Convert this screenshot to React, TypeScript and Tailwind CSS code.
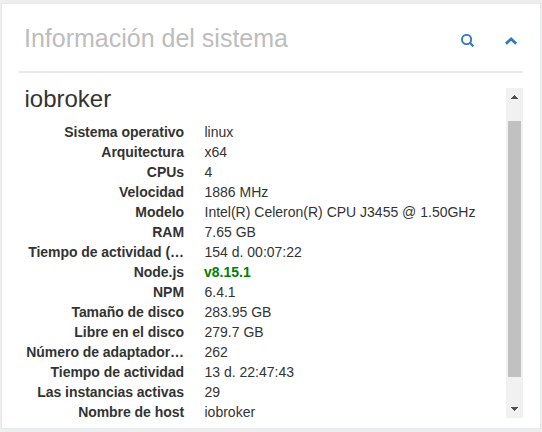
const rows: { label: string; value: string; highlight?: boolean }[] = [
  { label: 'Sistema operativo', value: 'linux' },
  { label: 'Arquitectura', value: 'x64' },
  { label: 'CPUs', value: '4' },
  { label: 'Velocidad', value: '1886 MHz' },
  { label: 'Modelo', value: 'Intel(R) Celeron(R) CPU J3455 @ 1.50GHz' },
  { label: 'RAM', value: '7.65 GB' },
  { label: 'Tiempo de actividad (…', value: '154 d. 00:07:22' },
  { label: 'Node.js', value: 'v8.15.1', highlight: true },
  { label: 'NPM', value: '6.4.1' },
  { label: 'Tamaño de disco', value: '283.95 GB' },
  { label: 'Libre en el disco', value: '279.7 GB' },
  { label: 'Número de adaptador…', value: '262' },
  { label: 'Tiempo de actividad', value: '13 d. 22:47:43' },
  { label: 'Las instancias activas', value: '29' },
  { label: 'Nombre de host', value: 'iobroker' },
];

function SearchIcon() {
  return (
    <svg width="13" height="13" viewBox="0 0 13 13" fill="none" stroke="#337ab7" strokeWidth="1.9">
      <circle cx="5.6" cy="5.5" r="4.6" />
      <path d="M8.8 8.8 12.4 12.4" strokeWidth="2.2" />
    </svg>
  );
}

function ChevronUpIcon() {
  return (
    <svg width="13" height="8" viewBox="0 0 13 8" fill="none" stroke="#337ab7" strokeWidth="2.8">
      <path d="M1 6.7 6.1 2 11.2 6.7" />
    </svg>
  );
}

function Scrollbar() {
  return (
    <div className="flex h-[330px] w-[17px] flex-col items-center bg-[#f1f1f1]">
      <svg className="shrink-0" width="17" height="17" viewBox="0 0 17 17" fill="#505050" shapeRendering="crispEdges">
        <path d="M8 7h1v1h1v1h1v1h1v1H5v-1h1V9h1V8h1z" />
      </svg>
      <div className="mt-4 h-64 w-[13px] bg-[#c1c1c1]" />
      <svg className="mt-auto shrink-0" width="17" height="17" viewBox="0 0 17 17" fill="#505050" shapeRendering="crispEdges">
        <path d="M5 6h7v1h-1v1h-1v1H9v1H8V9H7V8H6V7H5z" />
      </svg>
    </div>
  );
}

export default function App() {
  return (
    <div className="h-[432px] w-[542px] overflow-hidden bg-[#eeeeee] pt-[3px] pl-px font-['Liberation_Sans',Arial,sans-serif] text-[#333]">
      <section className="h-[426px] w-[540px] border border-[#e6e9ed] bg-white pl-[17px]">
        <header className="flex h-[69px] w-[504px] border-b-2 border-[#e6e9ed] pl-[5px]">
          <h2 className="mt-[17px] h-[34px] w-[437px] text-[25px] leading-[34px] whitespace-nowrap text-[#bdbdbd]">
            Información del sistema
          </h2>
          <button className="mt-[30px] h-[13px] w-[13px]" aria-label="Buscar">
            <SearchIcon />
          </button>
          <button className="mt-[33px] ml-[31px] h-2 w-[13px]" aria-label="Contraer">
            <ChevronUpIcon />
          </button>
        </header>
        <div className="mt-[15px] flex h-[330px] w-[504px] justify-between">
          <div className="w-[487px] pl-[5px]">
            <h3 className="-mt-[3px] h-[37px] pl-[0.5px] text-[24px] leading-7">iobroker</h3>
            <dl className="text-[14px] leading-5">
              {rows.map((row) => (
                <div key={row.label} className="flex h-5">
                  <dt className="flex w-40 shrink-0 justify-end font-bold tracking-[-0.05px] whitespace-nowrap">
                    {row.label}
                  </dt>
                  <dd className={row.highlight ? 'ml-5 font-bold text-[#008000]' : 'ml-5 pl-[0.5px] whitespace-nowrap'}>
                    {row.value}
                  </dd>
                </div>
              ))}
            </dl>
          </div>
          <Scrollbar />
        </div>
      </section>
    </div>
  );
}
